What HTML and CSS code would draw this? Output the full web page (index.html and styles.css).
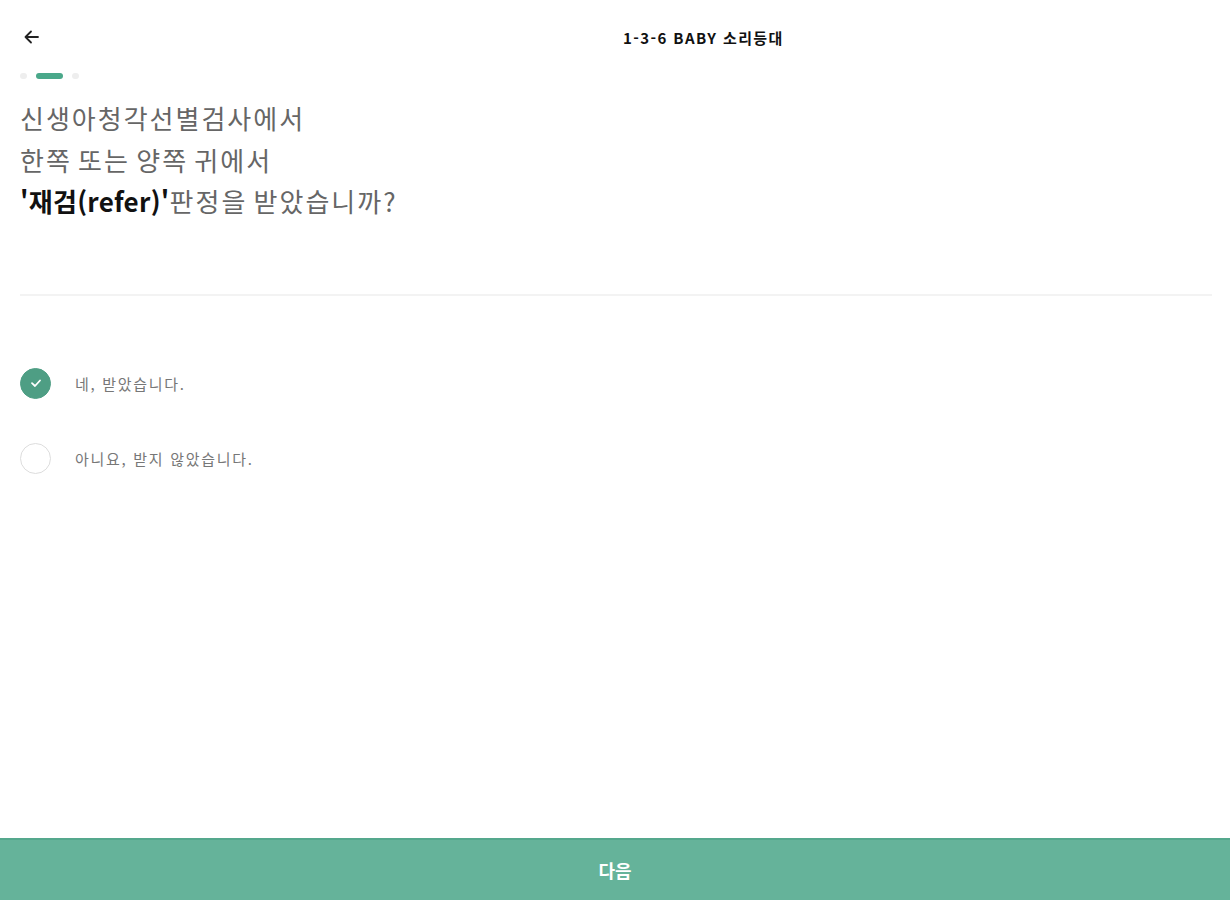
FILE: index.html
```html
<!DOCTYPE html>
<html lang="ko">
<head>
    <meta charset="UTF-8">
    <meta name="viewport" content="width=device-width, initial-scale=1.0">
    <title>1-3-6 BABY 소리등대</title>
    <link rel="stylesheet" href="styles.css">
</head>
<body>
    <div class="page">
        <!-- Header -->
        <header class="header">
            <button class="back" aria-label="뒤로">
                <svg width="18" height="18" viewBox="0 0 18 18">
                    <path d="M8 3.5 L2.5 9 L8 14.5 M2.5 9 H15" fill="none" stroke="#222" stroke-width="1.8" stroke-linecap="round" stroke-linejoin="round"/>
                </svg>
            </button>
            <h1 class="title">1-3-6 BABY 소리등대</h1>
        </header>

        <!-- Progress -->
        <div class="progress">
            <span class="dot"></span>
            <span class="dot active"></span>
            <span class="dot"></span>
        </div>

        <!-- Question -->
        <div class="question">
            <p>신생아청각선별검사에서</p>
            <p>한쪽 또는 양쪽 귀에서</p>
            <p><strong>'재검(refer)'</strong>판정을 받았습니까?</p>
        </div>

        <hr class="divider">

        <ul class="options">
            <li class="option checked">
                <span class="radio">
                    <svg width="14" height="14" viewBox="0 0 14 14">
                        <path d="M3 7.2 L6 10 L11 4.5" fill="none" stroke="#fff" stroke-width="1.8" stroke-linecap="round" stroke-linejoin="round"/>
                    </svg>
                </span>
                <span class="label">네, 받았습니다.</span>
            </li>
            <li class="option">
                <span class="radio"></span>
                <span class="label">아니요, 받지 않았습니다.</span>
            </li>
        </ul>
    </div>

    <button class="next">다음</button>
</body>
</html>
```

FILE: styles.css
```css
* {
    margin: 0;
    padding: 0;
    box-sizing: border-box;
    font-family: "Noto Sans CJK KR", "Noto Sans", sans-serif;
}

body {
    background-color: #fff;
    width: 1232px;
    height: 900px;
    display: flex;
    flex-direction: column;
    overflow: hidden;
}

.page {
    flex: 1;
    padding: 0 20px;
}

/* Header */
.header {
    display: flex;
    align-items: center;
    height: 74px;
}

.back {
    border: none;
    background: none;
    width: 24px;
    height: 24px;
    display: flex;
    align-items: center;
    justify-content: center;
    cursor: pointer;
}

.title {
    font-size: 15px;
    font-weight: 700;
    color: #111;
    margin-left: 579px;
    letter-spacing: 1.4px;
}

/* Progress dots */
.progress {
    display: flex;
    align-items: center;
    gap: 9px;
    height: 6px;
    margin-top: -1px;
}

.dot {
    width: 7px;
    height: 6px;
    border-radius: 3px;
    background-color: #eee;
}

.dot.active {
    width: 27px;
    background-color: #4aa88a;
}

/* Question */
.question {
    margin-top: 18px;
    font-size: 26px;
    line-height: 41.5px;
    color: #666;
    letter-spacing: 2px;
    word-spacing: -3px;
}

.question strong {
    color: #111;
    font-weight: 700;
    letter-spacing: 0.3px;
}

.divider {
    border: none;
    border-top: 2px solid #f3f3f3;
    margin-top: 72px;
}

/* Options */
.options {
    list-style: none;
    margin-top: 72px;
    display: flex;
    flex-direction: column;
    gap: 44px;
}

.option {
    display: flex;
    align-items: center;
    gap: 24px;
    height: 31px;
}

.radio {
    width: 31px;
    height: 31px;
    border-radius: 50%;
    border: 1.5px solid #ddd;
    display: flex;
    align-items: center;
    justify-content: center;
}

.option.checked .radio {
    background-color: #4e9e84;
    border-color: #4e9e84;
}

.label {
    font-size: 15px;
    color: #777;
    letter-spacing: 1.7px;
}

/* Bottom button */
.next {
    width: 1230px;
    height: 62px;
    border: none;
    border-top: 2px solid #55a88d;
    background-color: #65b39a;
    color: #fff;
    font-size: 18px;
    font-weight: 700;
    cursor: pointer;
}
```
